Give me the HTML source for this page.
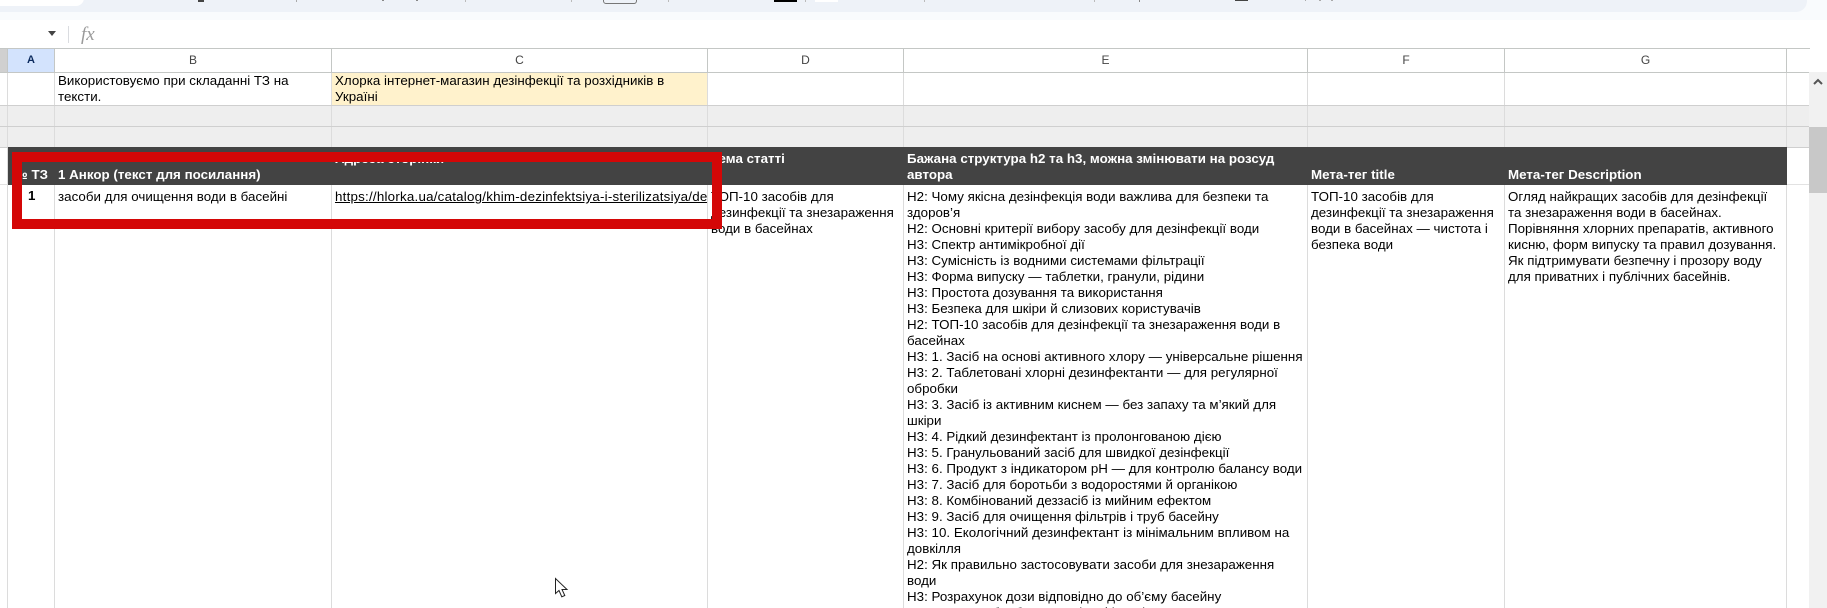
<!DOCTYPE html>
<html lang="uk">
<head>
<meta charset="utf-8">
<title>Таблиця</title>
<style>
html,body{margin:0;padding:0;background:#fff;width:1827px;height:608px;overflow:hidden}
#p{position:relative;width:1827px;height:608px;overflow:hidden;font-family:"Liberation Sans",Arial,sans-serif;font-size:13.33px;color:#000}
.a{position:absolute}
.t{position:absolute;white-space:nowrap;line-height:16px;letter-spacing:.02px}
.b{font-weight:bold}
.w{color:#fff;font-weight:bold}
.h{position:absolute;top:49px;height:23px;line-height:23px;text-align:center;font-size:12px;color:#444}
.v{position:absolute;width:1px;background:#dcdcdc}
.l{position:absolute;height:1px;background:#cfcfcf}
.vh{position:absolute;top:48px;height:24px;width:1px;background:#c4c7c5}
</style>
</head>
<body>
<div id="p">
<!-- top toolbar -->
<div class="a" style="left:0;top:0;width:1827px;height:20px;background:#f9fbfd"></div>
<div class="a" style="left:0;top:-10px;width:1807px;height:22px;background:#eef2f8;border-radius:0 12px 12px 0"></div>
<div class="a" style="left:-10px;top:-10px;width:94px;height:16px;background:#fff;border-radius:0 0 8px 0"></div>
<div class="a" style="left:198px;top:0;width:6px;height:2px;background:#444"></div>
<div class="a" style="left:296px;top:0;width:1px;height:2px;background:#aaa"></div>
<div class="a" style="left:382px;top:0;width:2px;height:1px;background:#888"></div>
<div class="a" style="left:416px;top:0;width:2px;height:1px;background:#888"></div>
<div class="a" style="left:465px;top:0;width:1px;height:2px;background:#bbb"></div>
<div class="a" style="left:571px;top:0;width:1px;height:2px;background:#bbb"></div>
<div class="a" style="left:603px;top:-8px;width:32px;height:10px;border:1px solid #777;border-radius:3px"></div>
<div class="a" style="left:668px;top:0;width:1px;height:2px;background:#bbb"></div>
<div class="a" style="left:774px;top:0;width:23px;height:2px;background:#000"></div>
<div class="a" style="left:805px;top:0;width:1px;height:2px;background:#bbb"></div>
<div class="a" style="left:815px;top:0;width:23px;height:2px;background:#fff"></div>
<div class="a" style="left:924px;top:0;width:1px;height:2px;background:#bbb"></div>
<div class="a" style="left:1094px;top:0;width:1px;height:2px;background:#bbb"></div>
<div class="a" style="left:1139px;top:0;width:1px;height:2px;background:#888"></div>
<div class="a" style="left:1235px;top:0;width:13px;height:1px;background:#444"></div>
<div class="a" style="left:1305px;top:0;width:1px;height:1px;background:#aaa"></div>
<div class="a" style="left:1319px;top:0;width:2px;height:1px;background:#aaa"></div>
<div class="a" style="left:1331px;top:0;width:2px;height:1px;background:#aaa"></div>

<!-- formula bar -->
<svg class="a" style="left:48px;top:31px" width="8" height="5" viewBox="0 0 8 5"><path d="M0 0H8L4 5Z" fill="#444"/></svg>
<div class="a" style="left:68px;top:26px;width:1px;height:17px;background:#dadce0"></div>
<div class="t" style="left:81px;top:25px;font-family:'Liberation Serif',serif;font-style:italic;font-size:19px;color:#9a9a9a;line-height:20px;letter-spacing:0">fx</div>

<!-- column header -->
<div class="a" style="left:0;top:48px;width:1809px;height:1px;background:#c4c7c5"></div>
<div class="a" style="left:0;top:49px;width:7px;height:23px;background:#d0d0d0"></div>
<div class="a" style="left:8px;top:49px;width:46px;height:23px;background:#d3e3fd"></div>
<div class="h b" style="left:8px;width:46px;color:#0b2a5e;font-size:11px">A</div>
<div class="h" style="left:55px;width:276px">B</div>
<div class="h" style="left:332px;width:375px">C</div>
<div class="h" style="left:708px;width:195px">D</div>
<div class="h" style="left:904px;width:403px">E</div>
<div class="h" style="left:1308px;width:196px">F</div>
<div class="h" style="left:1505px;width:281px">G</div>
<div class="vh" style="left:7px"></div>
<div class="vh" style="left:54px"></div>
<div class="vh" style="left:331px"></div>
<div class="vh" style="left:707px"></div>
<div class="vh" style="left:903px"></div>
<div class="vh" style="left:1307px"></div>
<div class="vh" style="left:1504px"></div>
<div class="vh" style="left:1786px"></div>
<div class="vh" style="left:1809px"></div>
<div class="l" style="left:0;top:72px;width:1809px;background:#c4c7c5"></div>

<!-- grey rows -->
<div class="a" style="left:0;top:106px;width:1809px;height:41px;background:#eeeeee"></div>
<!-- C1 yellow -->
<div class="a" style="left:332px;top:73px;width:375px;height:32px;background:#fff2cc"></div>

<!-- vertical grid -->
<div class="v" style="left:7px;top:73px;height:535px"></div>
<div class="v" style="left:54px;top:73px;height:535px"></div>
<div class="v" style="left:331px;top:73px;height:535px"></div>
<div class="v" style="left:707px;top:73px;height:535px"></div>
<div class="v" style="left:903px;top:73px;height:535px"></div>
<div class="v" style="left:1307px;top:73px;height:535px"></div>
<div class="v" style="left:1504px;top:73px;height:535px"></div>
<div class="v" style="left:1786px;top:73px;height:535px"></div>

<!-- horizontal grid -->
<div class="l" style="left:0;top:105px;width:1809px"></div>
<div class="l" style="left:0;top:126px;width:1809px"></div>
<div class="l" style="left:0;top:147px;width:1809px"></div>
<div class="l" style="left:0;top:184px;width:1809px;background:#e2e2e2"></div>

<!-- dark header -->
<div class="a" style="left:8px;top:147px;width:1779px;height:38px;background:#434343"></div>

<!-- row 1 text -->
<div class="t" style="left:58px;top:73px">Використовуємо при складанні ТЗ на<br>тексти.</div>
<div class="t" style="left:335px;top:73px">Хлорка інтернет-магазин дезінфекції та розхідників в<br>Україні</div>

<!-- dark header text -->
<div class="t w" style="left:0;width:48px;text-align:right;top:167px">№ ТЗ</div>
<div class="t w" style="left:58px;top:167px">1 Анкор (текст для посилання)</div>
<div class="t w" style="left:335px;top:151px">Адреса сторінки</div>
<div class="t w" style="left:711px;top:151px">Тема статті</div>
<div class="t w" style="left:907px;top:151px">Бажана структура h2 та h3, можна змінювати на розсуд<br>автора</div>
<div class="t w" style="left:1311px;top:167px">Мета-тег title</div>
<div class="t w" style="left:1508px;top:167px">Мета-тег Description</div>

<!-- body -->
<div class="t b" style="left:28px;top:188px">1</div>
<div class="t" style="left:58px;top:189px">засоби для очищення води в басейні</div>
<div class="t" style="left:335px;top:189px;width:372px;overflow:hidden;text-decoration:underline;letter-spacing:.23px">https://hlorka.ua/catalog/khim-dezinfektsiya-i-sterilizatsiya/dezinfektsiya-vody</div>
<div class="t" style="left:711px;top:189px">ТОП-10 засобів для<br>дезинфекції та знезараження<br>води в басейнах</div>
<div class="t" style="left:907px;top:189px">Н2: Чому якісна дезінфекція води важлива для безпеки та<br>здоров’я<br>Н2: Основні критерії вибору засобу для дезінфекції води<br>Н3: Спектр антимікробної дії<br>Н3: Сумісність із водними системами фільтрації<br>Н3: Форма випуску — таблетки, гранули, рідини<br>Н3: Простота дозування та використання<br>Н3: Безпека для шкіри й слизових користувачів<br>Н2: ТОП-10 засобів для дезінфекції та знезараження води в<br>басейнах<br>Н3: 1. Засіб на основі активного хлору — універсальне рішення<br>Н3: 2. Таблетовані хлорні дезинфектанти — для регулярної<br>обробки<br>Н3: 3. Засіб із активним киснем — без запаху та м’який для<br>шкіри<br>Н3: 4. Рідкий дезинфектант із пролонгованою дією<br>Н3: 5. Гранульований засіб для швидкої дезінфекції<br>Н3: 6. Продукт з індикатором pH — для контролю балансу води<br>Н3: 7. Засіб для боротьби з водоростями й органікою<br>Н3: 8. Комбінований деззасіб із мийним ефектом<br>Н3: 9. Засіб для очищення фільтрів і труб басейну<br>Н3: 10. Екологічний дезинфектант із мінімальним впливом на<br>довкілля<br>Н2: Як правильно застосовувати засоби для знезараження<br>води<br>Н3: Розрахунок дози відповідно до об’єму басейну<br>Н3: Частота обробки та заміна фільтрів</div>
<div class="t" style="left:1311px;top:189px">ТОП-10 засобів для<br>дезинфекції та знезараження<br>води в басейнах — чистота і<br>безпека води</div>
<div class="t" style="left:1508px;top:189px">Огляд найкращих засобів для дезінфекції<br>та знезараження води в басейнах.<br>Порівняння хлорних препаратів, активного<br>кисню, форм випуску та правил дозування.<br>Як підтримувати безпечну і прозору воду<br>для приватних і публічних басейнів.</div>

<!-- red highlight rectangle -->
<div class="a" style="left:12px;top:152px;width:690px;height:57px;border:10px solid #d40707"></div>

<!-- scrollbar -->
<div class="a" style="left:1809px;top:72px;width:18px;height:536px;background:#f1f1f1"></div>
<div class="a" style="left:1809px;top:49px;width:18px;height:23px;background:#fff"></div>
<div class="a" style="left:1809px;top:127px;width:18px;height:66px;background:#c8c8c8"></div>
<svg class="a" style="left:1812px;top:77px" width="12" height="9" viewBox="0 0 12 9"><path d="M2 7L6 3L10 7" fill="none" stroke="#555" stroke-width="2"/></svg>

<!-- mouse cursor -->
<svg class="a" style="left:554px;top:577px" width="15" height="22" viewBox="0 0 15 22"><path d="M1.5 1.5V16.5L5 13.5L7.8 19.8L10.8 18.5L8 12.5H13Z" fill="#fff" stroke="#222" stroke-width="1" stroke-linejoin="miter"/></svg>
</div>
</body>
</html>
